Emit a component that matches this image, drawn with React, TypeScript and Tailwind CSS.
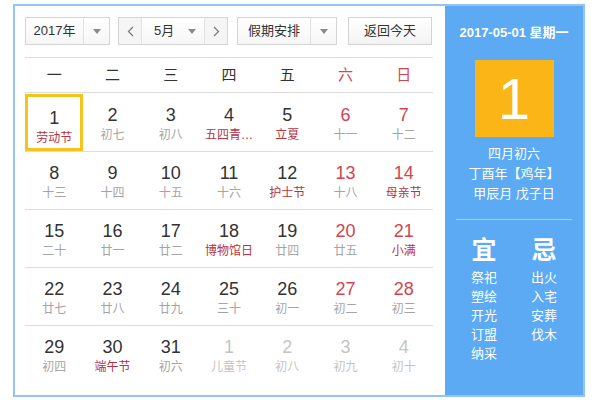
import React from 'react';

type Day = {
  n: number;
  sub: string;
  weekend?: boolean;
  fest?: boolean;
  other?: boolean;
  selected?: boolean;
};

const weekdays = ['一', '二', '三', '四', '五', '六', '日'];

const rows: Day[][] = [
  [
    { n: 1, sub: '劳动节', fest: true, selected: true },
    { n: 2, sub: '初七' },
    { n: 3, sub: '初八' },
    { n: 4, sub: '五四青…', fest: true },
    { n: 5, sub: '立夏', fest: true },
    { n: 6, sub: '十一', weekend: true },
    { n: 7, sub: '十二', weekend: true },
  ],
  [
    { n: 8, sub: '十三' },
    { n: 9, sub: '十四' },
    { n: 10, sub: '十五' },
    { n: 11, sub: '十六' },
    { n: 12, sub: '护士节', fest: true },
    { n: 13, sub: '十八', weekend: true },
    { n: 14, sub: '母亲节', weekend: true, fest: true },
  ],
  [
    { n: 15, sub: '二十' },
    { n: 16, sub: '廿一' },
    { n: 17, sub: '廿二' },
    { n: 18, sub: '博物馆日', fest: true },
    { n: 19, sub: '廿四' },
    { n: 20, sub: '廿五', weekend: true },
    { n: 21, sub: '小满', weekend: true, fest: true },
  ],
  [
    { n: 22, sub: '廿七' },
    { n: 23, sub: '廿八' },
    { n: 24, sub: '廿九' },
    { n: 25, sub: '三十' },
    { n: 26, sub: '初一' },
    { n: 27, sub: '初二', weekend: true },
    { n: 28, sub: '初三', weekend: true },
  ],
  [
    { n: 29, sub: '初四' },
    { n: 30, sub: '端午节', fest: true },
    { n: 31, sub: '初六' },
    { n: 1, sub: '儿童节', other: true },
    { n: 2, sub: '初八', other: true },
    { n: 3, sub: '初九', other: true },
    { n: 4, sub: '初十', other: true },
  ],
];

const yi = ['祭祀', '塑绘', '开光', '订盟', '纳采'];
const ji = ['出火', '入宅', '安葬', '伐木'];

function Arrow() {
  return (
    <svg width="8" height="5" viewBox="0 0 8 5" className="fill-[#8a8a8a]">
      <path d="M0 0h8L4 5z" />
    </svg>
  );
}

function Select({ label, width, arrowWidth }: { label: string; width: string; arrowWidth: string }) {
  return (
    <div className={`${width} flex h-[28px] border border-[#d4d4d4] bg-gradient-to-b from-white to-[#f6f6f6]`}>
      <div className="flex flex-1 items-center justify-center text-[13px] text-[#333]">{label}</div>
      <div className={`${arrowWidth} flex items-center justify-center border-l border-[#e2e2e2]`}>
        <Arrow />
      </div>
    </div>
  );
}

function Cell({ d }: { d: Day }) {
  let numColor = 'text-[#333]';
  if (d.weekend) numColor = 'text-[#cf4650]';
  if (d.other) numColor = 'text-[#c4c4c4]';
  let subColor = 'text-[#a5a5a5]';
  if (d.fest) subColor = 'text-[#b83340]';
  if (d.other) subColor = 'text-[#c4c4c4]';
  return (
    <div
      className={`flex h-[57px] flex-col items-center justify-start pt-[10px] ${
        d.selected ? 'border-[3px] border-[#f4c31c] pt-[7px]' : ''
      }`}
    >
      <span className={`text-[18px] leading-[22px] ${numColor}`}>{d.n}</span>
      <span className={`mt-[1px] whitespace-nowrap text-[12px] leading-[16px] ${subColor}`}>{d.sub}</span>
    </div>
  );
}

export default function App() {
  return (
    <div className="h-[400px] w-[600px] bg-white pl-[13px] pt-[4px] font-['Liberation_Sans','Noto_Sans_CJK_SC',sans-serif]">
      <div className="flex h-[393px] w-[572px] border-2 border-[#93c5f0]">
        <div className="flex w-[430px] flex-col bg-white pl-[10px] pr-[12px] pt-[11px]">
          <div className="flex h-[28px] items-center">
            <Select label="2017年" width="w-[85px]" arrowWidth="w-[26px]" />
            <div className="ml-[8px] flex h-[28px] w-[110px] border border-[#d4d4d4] bg-gradient-to-b from-white to-[#f6f6f6]">
              <div className="flex w-[23px] items-center justify-center border-r border-[#e2e2e2] bg-[#f5f5f5]">
                <svg width="7" height="11" viewBox="0 0 7 11" className="stroke-[#777]" fill="none">
                  <path d="M6 1L1.5 5.5L6 10" strokeWidth="1.2" />
                </svg>
              </div>
              <div className="flex flex-1 items-center justify-between pl-[12px] pr-[8px] text-[13px] text-[#333]">
                <span>5月</span>
                <Arrow />
              </div>
              <div className="flex w-[23px] items-center justify-center border-l border-[#e2e2e2] bg-[#f5f5f5]">
                <svg width="7" height="11" viewBox="0 0 7 11" className="stroke-[#777]" fill="none">
                  <path d="M1 1L5.5 5.5L1 10" strokeWidth="1.2" />
                </svg>
              </div>
            </div>
            <div className="ml-[9px]">
              <Select label="假期安排" width="w-[100px]" arrowWidth="w-[26px]" />
            </div>
            <div className="ml-[11px] flex h-[28px] w-[84px] items-center justify-center border border-[#d4d4d4] bg-gradient-to-b from-white to-[#f3f3f3] text-[13px] text-[#333]">
              返回今天
            </div>
          </div>

          <div className="mt-[12px] grid h-[36px] grid-cols-7 items-center border-y border-[#dcdcdc] text-[15px]">
            {weekdays.map((w, i) => (
              <div key={w} className={`text-center ${i >= 5 ? 'text-[#cf4650]' : 'text-[#333]'}`}>
                {w}
              </div>
            ))}
          </div>

          <div className="flex flex-col">
            {rows.map((row, ri) => (
              <div
                key={ri}
                className={`grid grid-cols-7 ${ri < rows.length - 1 ? 'border-b border-[#dcdcdc]' : ''} ${ri === 0 ? 'pt-[1px]' : ''}`}
              >
                {row.map((d, ci) => (
                  <Cell key={ci} d={d} />
                ))}
              </div>
            ))}
          </div>
        </div>

        <div className="flex flex-1 flex-col items-center bg-[#5ca9f4] text-white">
          <div className="mt-[19px] text-[13px] font-bold leading-[16px]">2017-05-01 星期一</div>
          <div className="mt-[19px] flex h-[77px] w-[79px] items-center justify-center bg-[#fbb516] text-[58px] leading-none">
            1
          </div>
          <div className="mt-[7px] flex flex-col items-center text-[13px] leading-[20px]">
            <span>四月初六</span>
            <span>丁酉年【鸡年】</span>
            <span>甲辰月 戊子日</span>
          </div>
          <div className="mt-[15px] h-px w-[116px] bg-[#a4cff8]" />
          <div className="mt-[16px] flex gap-[30px]">
            <div className="flex w-[30px] flex-col items-center">
              <span className="text-[25px] font-bold leading-[28px]">宜</span>
              <div className="mt-[4px] flex flex-col items-center text-[13px] leading-[19px]">
                {yi.map((t) => (
                  <span key={t}>{t}</span>
                ))}
              </div>
            </div>
            <div className="flex w-[30px] flex-col items-center">
              <span className="text-[25px] font-bold leading-[28px]">忌</span>
              <div className="mt-[4px] flex flex-col items-center text-[13px] leading-[19px]">
                {ji.map((t) => (
                  <span key={t}>{t}</span>
                ))}
              </div>
            </div>
          </div>
        </div>
      </div>
    </div>
  );
}
